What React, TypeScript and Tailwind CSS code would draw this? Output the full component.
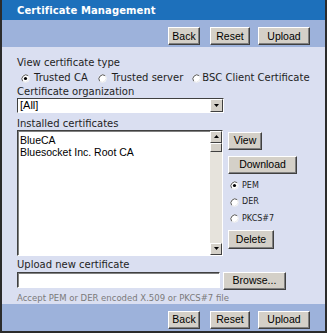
import React from "react";

const Radio = ({ checked }: { checked?: boolean }) => (
  <svg width="9" height="9" viewBox="0 0 9 9" className="shrink-0">
    <circle cx="4.5" cy="4.5" r="4" fill="#fff" />
    <path d="M1.7 7.3 A4 4 0 0 1 7.3 1.7" fill="none" stroke="#555" strokeWidth="1" />
    <path d="M7.3 1.7 A4 4 0 0 1 1.7 7.3" fill="none" stroke="#e8e8e8" strokeWidth="1" />
    {checked && <circle cx="4.5" cy="4.5" r="1.6" fill="#000" />}
  </svg>
);

const Btn = ({ children, className }: { children: React.ReactNode; className?: string }) => (
  <div
    className={
      "h-[18px] flex items-center justify-center bg-[#d4d0c8] border border-t-white border-l-white border-r-[#404040] border-b-[#404040] shadow-[inset_-1px_-1px_0_#808080] text-[10.5px] leading-none text-black font-['Liberation_Sans',Arial,sans-serif] " +
      (className || "")
    }
  >
    {children}
  </div>
);

const ArrowBox = ({ up }: { up?: boolean }) => (
  <div className="w-[12px] h-[12px] bg-[#d4d0c8] border border-t-white border-l-white border-r-[#404040] border-b-[#404040] flex items-center justify-center">
    <svg width="5" height="3" viewBox="0 0 5 3">
      {up ? <path d="M2.5 0 L5 3 L0 3 Z" fill="#000" /> : <path d="M0 0 L5 0 L2.5 3 Z" fill="#000" />}
    </svg>
  </div>
);

const Bar = ({ top }: { top?: boolean }) => (
  <div className={"bg-[#9db2db] flex justify-end pr-[15px] " + (top ? "h-[27px] pt-[7px]" : "h-[28px] pt-[7px]")}>
    <Btn className="w-[32px]">Back</Btn>
    <Btn className="w-[40px] ml-[10px]">Reset</Btn>
    <Btn className="w-[52px] ml-[8px]">Upload</Btn>
  </div>
);

export default function App() {
  return (
    <div className="w-[327px] h-[333px] bg-white">
      <div className="w-[327px] h-[333px] border-l-2 border-r-2 border-b-2 border-[#2b2b2b] flex flex-col font-['DejaVu_Sans',Verdana,sans-serif] text-[#1e1e1e]">
        <div className="h-[20px] shrink-0 bg-[#1d70bb] pl-[15px] flex items-center text-white font-bold text-[10px] tracking-[0.1px]">
          Certificate Management
        </div>
        <Bar top />
        <div className="flex-1 bg-[#dadff1] pl-[15px] pt-[8px] flex flex-col text-[10px]">
          <div className="leading-[15px]">View certificate type</div>
          <div className="h-[15px] flex items-center leading-[15px]">
            <span className="ml-[4px] mt-[2px]"><Radio checked /></span>
            <span className="ml-[4px]">Trusted CA</span>
            <span className="ml-[10px] mt-[2px]"><Radio /></span>
            <span className="ml-[5px]">Trusted server</span>
            <span className="ml-[9px] mt-[2px]"><Radio /></span>
            <span className="ml-[1px]">BSC Client Certificate</span>
          </div>
          <div className="leading-[13px]">Certificate organization</div>
          <div className="w-[207px] h-[15px] bg-white border border-t-[#404040] border-l-[#404040] border-b-white border-r-white flex items-stretch">
            <div className="flex-1 pl-[2px] text-[11px] leading-[13px] text-black font-['Liberation_Sans',Arial,sans-serif]">[All]</div>
            <div className="w-[13px] bg-[#d4d0c8] border border-t-white border-l-white border-r-[#404040] border-b-[#404040] flex items-center justify-center">
              <svg width="5" height="3" viewBox="0 0 5 3"><path d="M0 0 L5 0 L2.5 3 Z" fill="#000" /></svg>
            </div>
          </div>
          <div className="leading-[13px] mt-[4px]">Installed certificates</div>
          <div className="flex">
            <div className="w-[206px] h-[126px] bg-white border border-t-[#404040] border-l-[#404040] border-b-white border-r-white shadow-[inset_1px_1px_0_#808080] flex">
              <div className="flex-1 pl-[2px] pt-[3px] text-[10.5px] leading-[12.5px] text-black font-['Liberation_Sans',Arial,sans-serif]">
                <div>BlueCA</div>
                <div>Bluesocket Inc. Root CA</div>
              </div>
              <div className="w-[12px] bg-[#e6e3dc] flex flex-col">
                <ArrowBox up />
                <div className="w-[12px] h-[9px] bg-[#d4d0c8] border border-t-white border-l-white border-r-[#404040] border-b-[#404040]" />
                <div className="flex-1" />
                <ArrowBox />
              </div>
            </div>
            <div className="ml-[5px] pt-[2px] flex flex-col">
              <Btn className="w-[34px]">View</Btn>
              <Btn className="w-[69px] mt-[6px]">Download</Btn>
              <div className="flex flex-col mt-[4px] ml-[2px] text-[8px] leading-[16.5px]">
                <div className="flex items-center"><Radio checked /><span className="ml-[3px]">PEM</span></div>
                <div className="flex items-center"><Radio /><span className="ml-[3px]">DER</span></div>
                <div className="flex items-center"><Radio /><span className="ml-[3px]">PKCS#7</span></div>
              </div>
              <Btn className="w-[46px] mt-[3px] h-[19px]">Delete</Btn>
            </div>
          </div>
          <div className="leading-[14px] mt-[2px]">Upload new certificate</div>
          <div className="flex">
            <div className="w-[203px] h-[16px] bg-white border border-t-[#404040] border-l-[#404040] border-b-white border-r-white shadow-[inset_1px_1px_0_#808080]" />
            <Btn className="w-[63px] h-[17px] ml-[3px]">Browse...</Btn>
          </div>
          <div className="text-[8.5px] leading-[12px] mt-[2px] text-[#7a7a7a]">
            Accept PEM or DER encoded X.509 or PKCS#7 file
          </div>
        </div>
        <Bar />
      </div>
    </div>
  );
}
